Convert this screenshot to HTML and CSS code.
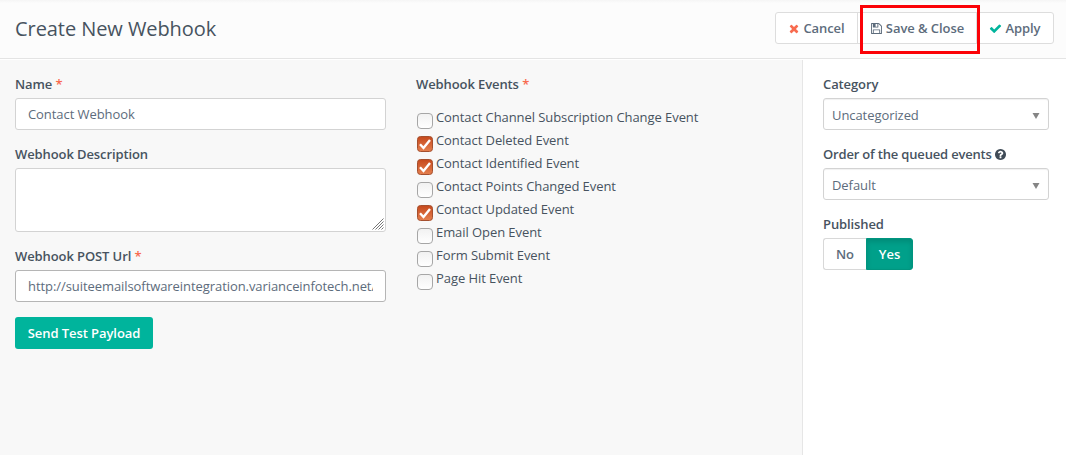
FILE: index.html
```html
<!DOCTYPE html>
<html lang="en">
<head>
<meta charset="utf-8">
<title>Create New Webhook</title>
<link rel="stylesheet" href="styles.css">
</head>
<body>
<svg class="defs" aria-hidden="true">
  <linearGradient id="on" x1="0" y1="0" x2="0" y2="1"><stop offset="0" stop-color="#c5481c"/><stop offset="1" stop-color="#e5804f"/></linearGradient>
  <linearGradient id="off" x1="0" y1="0" x2="0" y2="1"><stop offset="0" stop-color="#f1f1f1"/><stop offset="1" stop-color="#ffffff"/></linearGradient>
  <symbol id="box-off" viewBox="0 0 16 16"><rect x=".5" y=".5" width="15" height="15" rx="3.500" fill="url(#off)" stroke="#a6a6a6"/></symbol>
  <symbol id="box-on" viewBox="0 0 16 16"><rect x=".5" y=".5" width="15" height="15" rx="3" fill="url(#on)" stroke="#a5502f"/><path d="M3 8.300l3.500 3.700L13 4" fill="none" stroke="#fff" stroke-width="2.400"/></symbol>
</svg>
<header class="page-header">
  <h1 class="title">Create New Webhook</h1>
  <div class="toolbar">
    <button class="btn cancel"><svg class="icon icon-times" viewBox="0 0 1408 1792"><path d="M1298 1322q0 40-28 68l-136 136q-28 28-68 28t-68-28l-294-294-294 294q-28 28-68 28t-68-28l-136-136q-28-28-28-68t28-68l294-294-294-294q-28-28-28-68t28-68l136-136q28-28 68-28t68 28l294 294 294-294q28-28 68-28t68 28l136 136q28 28 28 68t-28 68l-294 294 294 294q28 28 28 68z"/></svg>Cancel</button>
    <button class="btn save"><svg class="icon icon-save" viewBox="128 0 1536 1792"><path d="M512 1536h768v-384h-768v384zm896 0h128v-896q0-14-10-38.500t-20-34.500l-281-281q-10-10-34-20t-39-10v416q0 40-28 68t-68 28h-576q-40 0-68-28t-28-68v-416h-128v1280h128v-416q0-40 28-68t68-28h832q40 0 68 28t28 68v416zm-384-928v-320q0-13-9.500-22.500t-22.500-9.500h-192q-13 0-22.500 9.500t-9.500 22.500v320q0 13 9.500 22.500t22.500 9.500h192q13 0 22.500-9.500t9.500-22.500zm640 32v928q0 40-28 68t-68 28h-1344q-40 0-68-28t-28-68v-1344q0-40 28-68t68-28h928q40 0 88 20t76 48l280 280q28 28 48 76t20 88z"/></svg>Save &amp; Close<span class="highlight"></span></button>
    <button class="btn apply"><svg class="icon icon-check" viewBox="0 0 1792 1792"><path d="M1671 566q0 40-28 68l-724 724-136 136q-28 28-68 28t-68-28l-136-136-362-362q-28-28-28-68t28-68l136-136q28-28 68-28t68 28l294 295 656-657q28-28 68-28t68 28l136 136q28 28 28 68z"/></svg>Apply</button>
  </div>
</header>
<div class="content">
  <main class="main">
    <section class="details">
      <label class="label" for="name">Name <span class="required">*</span></label>
      <input class="field" id="name" value="Contact Webhook">
      <label class="label" for="desc">Webhook Description</label>
      <div class="area-wrap">
        <textarea class="field area" id="desc"></textarea>
        <svg class="grip" viewBox="0 0 12 12"><path d="M.5 11.500L11.500.5M3.500 11.500l8-8M6.500 11.500l5-5M9.500 11.500l2-2"/></svg>
      </div>
      <label class="label" for="url">Webhook POST Url <span class="required">*</span></label>
      <input class="field url" id="url" value="http://suiteemailsoftwareintegration.varianceinfotech.net/">
      <button class="send">Send Test Payload</button>
    </section>
    <section class="events">
      <div class="label">Webhook Events <span class="required">*</span></div>
      <ul class="event-list">
        <li class="event"><svg class="box"><use href="#box-off"/></svg>Contact Channel Subscription Change Event</li>
        <li class="event"><svg class="box"><use href="#box-on"/></svg>Contact Deleted Event</li>
        <li class="event"><svg class="box"><use href="#box-on"/></svg>Contact Identified Event</li>
        <li class="event"><svg class="box"><use href="#box-off"/></svg>Contact Points Changed Event</li>
        <li class="event"><svg class="box"><use href="#box-on"/></svg>Contact Updated Event</li>
        <li class="event"><svg class="box"><use href="#box-off"/></svg>Email Open Event</li>
        <li class="event"><svg class="box"><use href="#box-off"/></svg>Form Submit Event</li>
        <li class="event"><svg class="box"><use href="#box-off"/></svg>Page Hit Event</li>
      </ul>
    </section>
  </main>
  <aside class="side">
    <div class="label">Category</div>
    <div class="field select">Uncategorized<svg class="caret" viewBox="0 0 8 6"><path d="M.5 0h7L4 6z"/></svg></div>
    <div class="label queue-label">Order of the queued events <svg class="help" viewBox="128 128 1536 1536"><path d="M1024 1376v-192q0-14-9-23t-23-9h-192q-14 0-23 9t-9 23v192q0 14 9 23t23 9h192q14 0 23-9t9-23zm256-672q0-88-55.500-163t-138.500-116-170-41q-243 0-371 213-15 24 8 42l132 100q7 6 19 6 16 0 25-12 53-68 86-92 34-24 86-24 48 0 85.500 26t37.500 59q0 38-20 61t-68 45q-63 28-115.500 86.500t-52.500 125.500v36q0 14 9 23t23 9h192q14 0 23-9t9-23q0-19 21.500-49.500t54.500-49.500q32-18 49-28.500t46-35 44.500-48 28-60.500 12.500-81zm384 192q0 209-103 385.500t-279.500 279.500-385.500 103-385.500-103-279.500-279.500-103-385.500 103-385.500 279.500-279.500 385.500-103 385.500 103 279.500 279.500 103 385.500z"/></svg></div>
    <div class="field select">Default<svg class="caret" viewBox="0 0 8 6"><path d="M.5 0h7L4 6z"/></svg></div>
    <div class="label">Published</div>
    <div class="toggle"><button class="no">No</button><button class="yes">Yes</button></div>
  </aside>
</div>
</body>
</html>
```
FILE: styles.css
```css
* { box-sizing: border-box; }
body {
  margin: 0;
  height: 455px;
  display: flex;
  flex-direction: column;
  overflow: hidden;
  background: #fff;
  color: #47535f;
  font: 13px/18px "Open Sans", "Noto Sans", sans-serif;
  letter-spacing: -.07px;
}
button, input, textarea { font: inherit; color: inherit; letter-spacing: inherit; margin: 0; }
.defs { width: 0; height: 0; flex: none; display: block; }
.page-header {
  flex: none;
  height: 59px;
  display: flex;
  justify-content: space-between;
  padding: 12px 12px 0 15px;
  background: linear-gradient(#f5f5f5, #fcfcfc 3px);
  border-bottom: 1px solid #e4e4e4;
}
.title { margin: 0; font-size: 20px; line-height: 34px; font-weight: 400; }
.toolbar { display: flex; height: 32px; }
.btn {
  position: relative;
  display: flex;
  align-items: center;
  justify-content: center;
  padding: 0;
  background: #fff;
  border: 1px solid #ddd;
  color: #5d6c7c;
  font-weight: 600;
}
.cancel { width: 83px; padding-left: 1px; border-radius: 3px 0 0 3px; }
.save { width: 120px; margin-left: -1px; padding-left: 1px; z-index: 1; }
.apply { width: 78px; margin-left: -1px; border-radius: 0 3px 3px 0; }
.icon { height: 13px; margin-right: 4px; fill: currentColor; }
.icon-times { width: 10px; color: #f86b4f; }
.icon-save { width: 11px; }
.icon-check { width: 13px; margin-right: 3px; color: #00b49c; }
.highlight {
  position: absolute;
  inset: -8px -4px -11px 2px;
  border: 3px solid #fb0207;
}
.content { flex: 1; display: flex; margin-top: 1px; }
.main {
  width: 802px;
  display: flex;
  gap: 30px;
  padding: 15px;
  background: #f8f8f8;
}
.details { width: 371px; }
.events { flex: 1; }
.label { display: block; height: 18px; margin-bottom: 5px; font-weight: 600; letter-spacing: -.1px; white-space: pre; }
.queue-label { letter-spacing: -.18px; }
.required { color: #f86b4f; }
.field {
  display: block;
  width: 100%;
  height: 32px;
  margin-bottom: 15px;
  padding: 0 12px;
  background: #fff;
  border: 1px solid #d3d3d3;
  border-radius: 3px;
  outline: none;
  color: #5d6c7c;
}
.url { border-color: #b5b5b5; }
.area-wrap { position: relative; margin-bottom: 15px; }
.area { height: 64px; margin: 0; resize: none; }
.grip {
  position: absolute;
  right: 2px;
  bottom: 2px;
  width: 12px;
  height: 12px;
  fill: none;
  stroke: #777;
}
.send {
  display: block;
  width: 138px;
  height: 32px;
  padding: 0;
  border: 0;
  border-radius: 3px;
  background: #00b49c;
  color: #fff;
  font-weight: 600;
}
.event-list { list-style: none; margin: 0; padding: 10px 0 0; }
.event { display: flex; gap: 3px; height: 23px; white-space: nowrap; }
.box { width: 16px; height: 16px; margin: 5px 0 0 1px; }
.side { flex: 1; padding: 15px 17px 0 20px; border-left: 1px solid #e6e6e6; }
.select {
  display: flex;
  align-items: center;
  justify-content: space-between;
  padding: 2px 8px 0;
  box-shadow: inset 0 1px 1px rgba(0, 0, 0, .06);
}
.caret { width: 8px; height: 6px; margin-top: 1px; fill: #858585; }
.help { width: 11px; height: 11px; fill: #3f4b57; vertical-align: -1px; }
.toggle { display: flex; height: 32px; }
.no, .yes { padding: 0; font-weight: 600; }
.no {
  width: 43px;
  background: #fff;
  border: 1px solid #d8d8d8;
  border-right: 0;
  border-radius: 3px 0 0 3px;
  color: #5d6c7c;
}
.yes {
  width: 47px;
  background: #00a08a;
  border: 1px solid #00957f;
  border-radius: 0 3px 3px 0;
  color: #fff;
  box-shadow: inset 0 3px 5px rgba(0, 0, 0, .125);
}
```
